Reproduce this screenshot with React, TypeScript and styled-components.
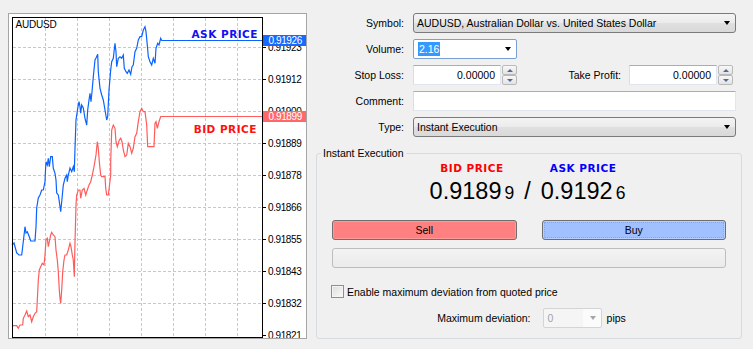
import React from 'react';
import styled, { createGlobalStyle } from 'styled-components';

const GlobalStyle = createGlobalStyle`
  html, body {
    margin: 0;
    padding: 0;
    background: #f0f0f0;
    overflow: hidden;
  }
  body {
    font-family: "Liberation Sans", Arial, sans-serif;
    font-size: 10.5px;
    color: #000;
  }
`;

type Pt = [number, number];

const askPts: Pt[] = [
  [12, 245], [14, 243], [16.7, 253], [19, 255], [21.7, 255], [22.7, 246.7], [25, 226.7], [26, 233],
  [27.3, 231.7], [29.3, 236.7], [30.7, 241], [35, 241], [36, 226.7], [36.7, 208], [38.3, 198], [40, 195],
  [41.7, 190], [43.3, 190], [45, 181.7], [45.5, 170], [46, 161.7], [47.3, 165], [48.3, 158.3], [49.3, 166.7],
  [50.7, 156.7], [52.3, 156.7], [53.3, 168.3], [55, 173.3], [56, 180], [56.7, 193], [58.3, 195], [59.3, 201.7],
  [60.7, 211.7], [61.7, 201.7], [63.3, 185], [65, 178.3], [66.7, 175], [67.3, 181.7], [68.3, 175], [70, 168],
  [71.7, 171.7], [73.3, 166.7], [74.3, 171.7], [75, 148.3], [76, 120], [77.7, 108.3], [79, 101.7], [80, 106.7],
  [80.7, 113.3], [81.7, 105], [83.3, 108], [85, 118.3], [86.7, 125], [87.7, 110], [89, 100], [90, 93.3],
  [91, 101.7], [92, 91.7], [93.3, 76.7], [95, 60], [96, 58], [97.7, 54.3], [98.3, 71.7], [100, 88.3],
  [101.7, 95], [103.3, 100], [105, 110], [106.7, 120], [107.7, 116.7], [109, 90], [110.7, 70], [111.7, 61.7],
  [113.3, 58.3], [115, 43.3], [116, 51.7], [116.7, 66.7], [118.3, 58.3], [120, 56.7], [121.7, 58.3], [123.3, 55],
  [124.3, 68.3], [126, 71.7], [127.3, 73.3], [129, 70], [130.7, 74.3], [132, 66.7], [133.3, 65], [135, 51.7],
  [136.7, 48.3], [138.3, 40], [140, 36.7], [141.7, 36.7], [143.3, 30], [145, 26.7], [146, 31.7], [147.3, 45],
  [148.3, 56.7], [150, 61.7], [151.7, 65], [153.3, 58.3], [155, 63.3], [156, 48.3], [157.7, 43.3], [159, 45],
  [160.7, 38.3], [161.7, 40.5], [263, 40.5],
];

const bidPts: Pt[] = [
  [12.7, 325.7], [16.7, 325.7], [18.3, 328.3], [20, 325], [22.7, 325], [23.3, 318.3], [25, 315], [26.7, 311],
  [28.3, 316.7], [30, 315], [31.7, 321.7], [33.3, 316.7], [35, 313.3], [36.7, 311.7], [37.3, 300], [38.3, 280],
  [39.3, 270], [40.7, 266.7], [42.3, 263.3], [44, 265], [45, 255], [46, 240], [47.3, 238.3], [48.3, 246.7],
  [49.3, 241.7], [50.7, 235], [51.7, 232.3], [53.3, 235], [55, 236.7], [56, 250], [57.3, 260], [58.3, 271.7],
  [59.3, 290], [60, 298.3], [60.7, 303.3], [61.7, 290], [62.7, 271.7], [64, 260], [65, 255], [66.7, 255],
  [68.3, 250], [70, 243.3], [71, 246.7], [72.3, 255], [73.3, 260], [74.3, 276.7], [75, 241.7], [76, 205],
  [76.7, 195], [78.3, 190], [80, 190], [80.7, 198.3], [82.3, 190], [84, 188.3], [85.7, 195], [87.3, 190],
  [89, 185], [90.7, 181.7], [92.3, 175], [94, 166.7], [96, 155], [97.3, 141.7], [98.3, 148.3], [99.3, 161.7],
  [100.7, 175], [101.7, 176.7], [105, 176.7], [105.7, 188.3], [106.7, 195], [108.3, 195], [109.3, 186.7],
  [110.7, 175], [110.7, 161.7], [111.7, 130], [113.3, 125], [115, 128.3], [116, 141.7], [117.3, 146.7],
  [119.3, 140], [120.7, 138.3], [122, 141.7], [123.3, 150], [125, 156.7], [126.7, 155], [128.3, 143.3],
  [130, 146.7], [131.7, 153.3], [133.3, 148.3], [135, 136.7], [136.7, 133.3], [138.3, 121.7], [140, 111.7],
  [141.7, 108.3], [143.3, 111.7], [145, 111.7], [146.7, 125], [147.7, 146.7], [154, 146.7], [155, 123.3],
  [156, 121.7], [157.3, 128.3], [159, 121.7], [160.7, 116.5], [263, 116.5],
];

const gridX = [45, 77, 109, 141, 173, 205, 237];

const levels = [
  { y: 47, v: '0.91923' },
  { y: 79, v: '0.91912' },
  { y: 111, v: '0.91900' },
  { y: 143, v: '0.91889' },
  { y: 175, v: '0.91878' },
  { y: 207, v: '0.91866' },
  { y: 239, v: '0.91855' },
  { y: 271, v: '0.91843' },
  { y: 303, v: '0.91832' },
  { y: 335, v: '0.91821' },
];

const toPoints = (pts: Pt[]) => pts.map(([x, y]) => `${x},${y}`).join(' ');

/* ---------- layout ---------- */

const Page = styled.div`
  display: flex;
  align-items: flex-start;
  width: 753px;
  height: 349px;
  box-sizing: border-box;
  padding: 13px 0 0 8px;
`;

/* ---------- chart ---------- */

const ChartPanel = styled.div`
  flex-shrink: 0;
  width: 299px;
  height: 326px;
  box-sizing: border-box;
  border: 1px solid #a5a5a5;
  background: #fff;
`;

const ChartSvg = styled.svg`
  display: block;
`;

const AxisText = styled.text`
  font-family: "Liberation Sans", Arial, sans-serif;
  font-size: 10px;
  letter-spacing: -0.4px;
  fill: #000;
`;

const TagText = styled(AxisText)`
  fill: #fff;
`;

const SymbolText = styled.text`
  font-family: "Liberation Sans", Arial, sans-serif;
  font-size: 10px;
  letter-spacing: -0.2px;
  fill: #000;
`;

const Annotation = styled.text<{ $color: string }>`
  font-family: "DejaVu Sans", Verdana, sans-serif;
  font-weight: bold;
  font-size: 10.5px;
  letter-spacing: 0.5px;
  fill: ${p => p.$color};
`;

const Chart = () => (
  <ChartPanel>
    <ChartSvg width={297} height={324} viewBox="9 14 297 324">
      {gridX.map(x => (
        <line key={x} x1={x + 0.5} y1={18} x2={x + 0.5} y2={337} stroke="#c8c8c8" strokeDasharray="3 2" />
      ))}
      {levels.slice(0, 9).map(l => (
        <line key={l.y} x1={13} y1={l.y + 0.5} x2={262} y2={l.y + 0.5} stroke="#c8c8c8" strokeDasharray="3 2" />
      ))}
      <polyline points={toPoints(bidPts)} fill="none" stroke="#ff5c5c" strokeWidth={1.2} />
      <polyline points={toPoints(askPts)} fill="none" stroke="#0a62ff" strokeWidth={1.2} />
      <rect x={12.5} y={17.5} width={250} height={320} fill="none" stroke="#000" />
      {levels.map(l => (
        <g key={l.v}>
          <line x1={262} y1={l.y + 0.5} x2={266} y2={l.y + 0.5} stroke="#000" />
          <AxisText x={268} y={l.y + 4.3}>{l.v}</AxisText>
        </g>
      ))}
      <rect x={263} y={35} width={43} height={11} fill="#1669ff" />
      <TagText x={268.5} y={44}>0.91926</TagText>
      <rect x={263} y={111} width={43} height={11} fill="#ff6868" />
      <TagText x={268.5} y={120}>0.91899</TagText>
      <SymbolText x={15.5} y={28}>AUDUSD</SymbolText>
      <Annotation $color="#1010f0" x={258} y={38} textAnchor="end">ASK PRICE</Annotation>
      <Annotation $color="#ff1010" x={257} y={132.5} textAnchor="end">BID PRICE</Annotation>
    </ChartSvg>
  </ChartPanel>
);

/* ---------- order form ---------- */

const FormArea = styled.div`
  display: flex;
  flex-direction: column;
  width: 426px;
  margin-left: 9px;
`;

const FieldGrid = styled.div`
  display: grid;
  grid-template-columns: 88px 323px;
  grid-auto-rows: 20px;
  column-gap: 9px;
  row-gap: 6px;
`;

const Label = styled.div`
  display: flex;
  align-items: center;
  justify-content: flex-end;
  white-space: nowrap;
`;

const Select = styled.div<{ $width?: number }>`
  display: flex;
  align-items: center;
  width: ${p => (p.$width ? `${p.$width}px` : '100%')};
  height: 20px;
  box-sizing: border-box;
  padding-left: 3px;
  border: 1px solid #7a7a7a;
  border-radius: 3px;
  background: linear-gradient(#f4f4f4, #ebebeb 50%, #e0e0e0 51%, #d9d9d9);
  white-space: nowrap;
`;

const EditCombo = styled.div`
  display: flex;
  align-items: center;
  width: 104px;
  height: 20px;
  box-sizing: border-box;
  padding-left: 4px;
  border: 1px solid #7b9fd3;
  border-radius: 2px;
  background: #fff;
`;

const Selected = styled.span`
  padding: 1px 1px;
  background: #3399ff;
  color: #fff;
`;

const Arrow = styled.span<{ $color?: string }>`
  margin-left: auto;
  margin-right: 5px;
  width: 0;
  height: 0;
  border-left: 3.5px solid transparent;
  border-right: 3.5px solid transparent;
  border-top: 4px solid ${p => p.$color || '#000'};
`;

const TextBox = styled.div`
  display: flex;
  align-items: center;
  justify-content: flex-end;
  box-sizing: border-box;
  height: 20px;
  padding-right: 5px;
  border: 1px solid #e1e6ee;
  border-top-color: #abadb3;
  border-left-color: #dadde5;
  background: #fff;
`;

const SpinWrap = styled.div<{ $last?: boolean }>`
  display: flex;
  width: 104px;
  height: 20px;
  flex-shrink: 0;
  margin-right: ${p => (p.$last ? '3px' : '0')};
`;

const SpinField = styled(TextBox)`
  flex: 1;
`;

const SpinButtons = styled.div`
  display: flex;
  flex-direction: column;
  width: 15px;
  margin-left: 1px;
`;

const SpinButton = styled.div`
  flex: 1;
  display: flex;
  align-items: center;
  justify-content: center;
  border: 1px solid #b9b9b9;
  border-radius: 2px;
  background: linear-gradient(#f8f8f8, #e3e3e3);
`;

const SpinArrow = styled.span<{ $dir: 'up' | 'down' }>`
  width: 0;
  height: 0;
  border-left: 3px solid transparent;
  border-right: 3px solid transparent;
  ${p => (p.$dir === 'up' ? 'border-bottom: 3px solid #52699a;' : 'border-top: 3px solid #52699a;')}
`;

const PairCell = styled.div`
  display: flex;
  align-items: center;
`;

const InlineLabel = styled.div`
  flex: 1;
  text-align: right;
  margin-right: 8px;
  white-space: nowrap;
`;

const Spin = ({ value, last }: { value: string; last?: boolean }) => (
  <SpinWrap $last={last}>
    <SpinField>{value}</SpinField>
    <SpinButtons>
      <SpinButton><SpinArrow $dir="up" /></SpinButton>
      <SpinButton><SpinArrow $dir="down" /></SpinButton>
    </SpinButtons>
  </SpinWrap>
);

/* ---------- instant execution group ---------- */

const Group = styled.fieldset`
  margin: 9px 0 0;
  padding: 2px 15px 10px;
  min-width: 0;
  border: 1px solid #d5dbe0;
  border-radius: 3px;
`;

const Legend = styled.legend`
  margin-left: -11px;
  padding: 0 2px;
  line-height: 14px;
`;

const PriceRow = styled.div`
  display: flex;
  justify-content: center;
  align-items: flex-end;
  margin-left: -3px;
`;

const PriceCol = styled.div`
  display: flex;
  flex-direction: column;
  align-items: center;
`;

const PriceTitle = styled.div<{ $color: string }>`
  font-family: "DejaVu Sans", Verdana, sans-serif;
  font-weight: bold;
  font-size: 10.5px;
  letter-spacing: 0.5px;
  line-height: 12px;
  color: ${p => p.$color};
`;

const BigPrice = styled.div`
  height: 26px;
  margin-top: 4px;
  font-size: 23.5px;
  line-height: 26px;
  white-space: nowrap;
`;

const SmallDigit = styled.span`
  margin-left: 3px;
  font-size: 17.5px;
`;

const Slash = styled(BigPrice)`
  margin: 0 10px;
`;

const TradeButtons = styled.div`
  display: grid;
  grid-template-columns: 1fr 1fr;
  column-gap: 25px;
  margin-top: 16px;
`;

const TradeButton = styled.button<{ $tone: 'sell' | 'buy' }>`
  height: 20px;
  padding: 0;
  border: 1px solid #6e6e6e;
  border-radius: 3px;
  background: ${p => (p.$tone === 'sell' ? '#ff8080' : '#a0c0ff')};
  box-shadow: inset 0 0 0 1px ${p => (p.$tone === 'sell' ? '#ff9a9a' : '#b6cfff')};
  outline: ${p => (p.$tone === 'buy' ? '1px dotted #86a7e6' : 'none')};
  outline-offset: -3px;
  font: inherit;
  color: #000;
`;

const StatusBar = styled.div`
  height: 20px;
  margin-top: 8px;
  box-sizing: border-box;
  border: 1px solid #bdbdbd;
  border-radius: 3px;
  background: linear-gradient(#f3f3f3, #ebebeb);
`;

const CheckRow = styled.label`
  display: flex;
  align-items: center;
  height: 13px;
  margin-top: 17px;
  margin-left: -1px;
  white-space: nowrap;
`;

const CheckBox = styled.span`
  width: 13px;
  height: 13px;
  box-sizing: border-box;
  margin-right: 3px;
  border: 1px solid #8f8f8f;
  box-shadow: inset 0 0 0 1px #f4f4f4;
  background: linear-gradient(135deg, #dcdcdc, #fbfbfb);
`;

const DeviationRow = styled.div`
  display: flex;
  justify-content: center;
  align-items: center;
  height: 20px;
  margin-top: 10px;
  padding-left: 5px;
`;

const DevCombo = styled.div`
  display: flex;
  align-items: center;
  width: 59px;
  height: 20px;
  box-sizing: border-box;
  margin: 0 5px 0 12px;
  padding-left: 4px;
  border: 1px solid #d4d4d4;
  border-radius: 2px;
  background: linear-gradient(90deg, #f5f5f5 68%, #fbfbfb 68%);
  color: #a3a3a3;
`;

const App = () => (
  <>
    <GlobalStyle />
    <Page>
      <Chart />
      <FormArea>
        <FieldGrid>
          <Label>Symbol:</Label>
          <Select>
            AUDUSD, Australian Dollar vs. United States Dollar
            <Arrow />
          </Select>

          <Label>Volume:</Label>
          <EditCombo>
            <Selected>2.16</Selected>
            <Arrow />
          </EditCombo>

          <Label>Stop Loss:</Label>
          <PairCell>
            <Spin value="0.00000" />
            <InlineLabel>Take Profit:</InlineLabel>
            <Spin value="0.00000" last />
          </PairCell>

          <Label>Comment:</Label>
          <TextBox />

          <Label>Type:</Label>
          <Select>
            Instant Execution
            <Arrow />
          </Select>
        </FieldGrid>

        <Group>
          <Legend>Instant Execution</Legend>
          <PriceRow>
            <PriceCol>
              <PriceTitle $color="#ff0000">BID PRICE</PriceTitle>
              <BigPrice>0.9189<SmallDigit>9</SmallDigit></BigPrice>
            </PriceCol>
            <Slash>/</Slash>
            <PriceCol>
              <PriceTitle $color="#0000ff">ASK PRICE</PriceTitle>
              <BigPrice>0.9192<SmallDigit>6</SmallDigit></BigPrice>
            </PriceCol>
          </PriceRow>

          <TradeButtons>
            <TradeButton $tone="sell">Sell</TradeButton>
            <TradeButton $tone="buy">Buy</TradeButton>
          </TradeButtons>

          <StatusBar />

          <CheckRow>
            <CheckBox />
            Enable maximum deviation from quoted price
          </CheckRow>

          <DeviationRow>
            Maximum deviation:
            <DevCombo>
              0
              <Arrow $color="#a6a6a6" />
            </DevCombo>
            pips
          </DeviationRow>
        </Group>
      </FormArea>
    </Page>
  </>
);

export default App;
